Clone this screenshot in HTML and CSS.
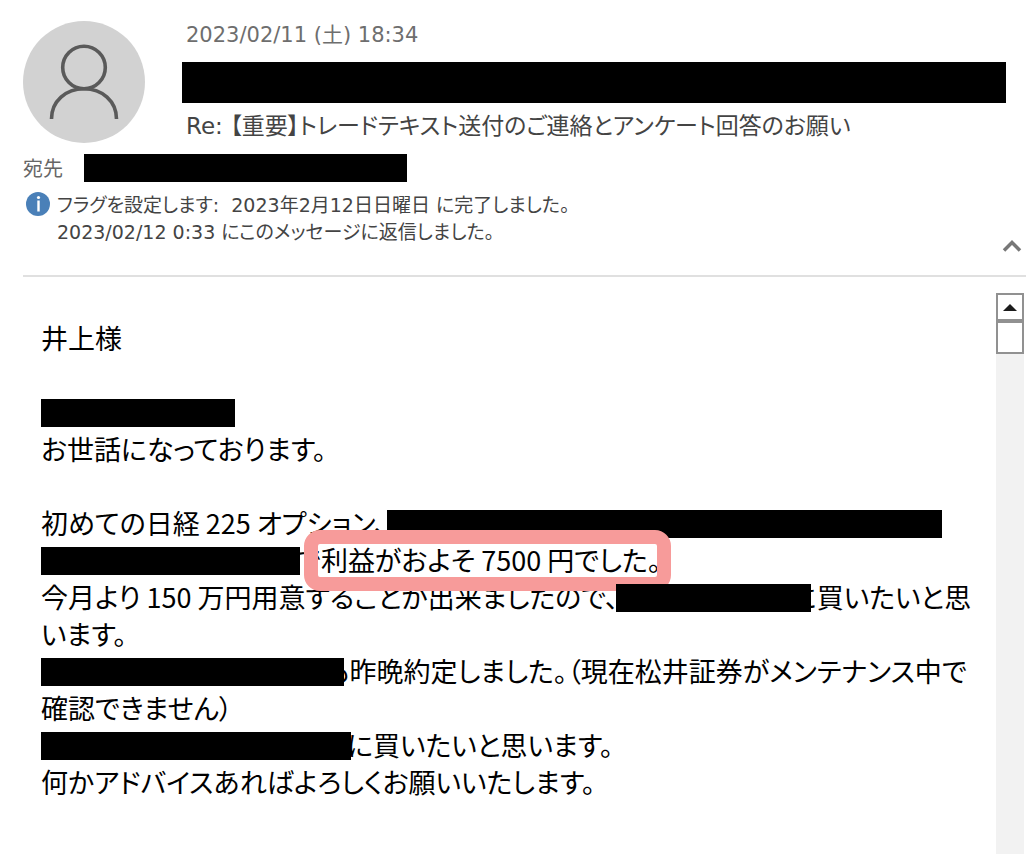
FILE: index.html
```html
<!DOCTYPE html>
<html lang="ja">
<head>
<meta charset="utf-8">
<meta name="viewport" content="width=device-width, initial-scale=1">
<title>Re: 【重要】トレードテキスト送付のご連絡とアンケート回答のお願い</title>
<link rel="stylesheet" href="styles.css">
</head>
<body>
<div class="message">
  <header class="header">
    <div class="summary">
      <svg class="avatar" viewBox="0 0 122 122" aria-hidden="true">
        <circle cx="61" cy="61" r="61" fill="#d2d2d2"/>
        <g fill="none" stroke="#5a5a5a" stroke-width="3.6">
          <circle cx="61" cy="46.500" r="21.300"/>
          <path d="M28.500 98C28.500 80 43 67.800 61 67.800S93.500 80 93.500 98"/>
        </g>
      </svg>
      <div class="heading">
        <time class="date" datetime="2023-02-11T18:34">2023/02/11 (土) 18:34</time>
        <div class="sender redacted"></div>
        <h1 class="subject">Re: 【重要】トレードテキスト送付のご連絡とアンケート回答のお願い</h1>
      </div>
    </div>
    <div class="recipient">
      <span class="label">宛先</span>
      <span class="address redacted"></span>
    </div>
    <div class="notice">
      <svg class="info" viewBox="0 0 24 24" aria-hidden="true">
        <circle cx="12" cy="12" r="12" fill="#4a80b8"/>
        <circle cx="12.500" cy="5.500" r="1.600" fill="#fff"/>
        <path d="M12.500 8.500v11" stroke="#fff" stroke-width="2.400"/>
      </svg>
      <div class="notice-text">
        <p>フラグを設定します:&nbsp; 2023年2月12日日曜日 に完了しました。</p>
        <p>2023/02/12 0:33 にこのメッセージに返信しました。</p>
      </div>
      <button class="collapse" type="button" aria-label="折りたたむ">
        <svg viewBox="0 0 20 14" aria-hidden="true"><path d="M2 11.500L10 3.500L18 11.500" fill="none" stroke="#777" stroke-width="3.500"/></svg>
      </button>
    </div>
  </header>
  <div class="content">
    <main class="body">
      <p>井上様</p>
      <p class="space"><span class="redacted bar name"></span><br>お世話になっております。</p>
      <p class="space">初めての日経 225 オプション、<span class="redacted bar trade"></span><br><span class="redacted bar result"></span>で<mark class="highlight">利益がおよそ 7500 円でした。</mark><br>今月より 150 万円用意することが出来ましたので、<span class="redacted bar plan"></span>に買いたいと思<br>います。<br><span class="redacted bar order"></span>も昨晩約定しました。（現在松井証券がメンテナンス中で<br>確認できません）<br><span class="redacted bar next"></span>に買いたいと思います。<br>何かアドバイスあればよろしくお願いいたします。</p>
    </main>
    <div class="scrollbar">
      <button class="scroll-up" type="button" aria-label="上へスクロール"><svg viewBox="0 0 14 8" aria-hidden="true"><path d="M0 8L7 1L14 8Z" fill="#1c1c1c"/></svg></button>
      <div class="thumb"></div>
    </div>
  </div>
</div>
</body>
</html>
```
FILE: styles.css
```css
* { box-sizing: border-box; }

body {
  margin: 0;
  background: #fff;
  color: #444;
  font-family: "DejaVu Sans", "Noto Sans CJK JP", sans-serif;
  font-feature-settings: "palt";
}

p, h1 { margin: 0; }

button {
  padding: 0;
  border: 0;
  background: none;
}

svg { display: block; }

.message {
  display: flex;
  flex-direction: column;
  min-height: 100vh;
  padding: 20px 8px 2px 23px;
}

.header {
  padding-bottom: 22px;
  border-bottom: 2px solid #e0e0e0;
}

.summary {
  display: flex;
  gap: 37px;
}

.avatar {
  flex: none;
  width: 122px;
  height: 122px;
  margin-top: 1px;
}

.heading {
  flex: 1;
  min-width: 0;
  padding-right: 20px;
}

.date {
  display: block;
  height: 30px;
  padding-left: 4px;
  color: #6e6e6e;
  font-size: 21px;
  line-height: 30px;
}

.redacted { background: #000; }

.sender {
  height: 41px;
  margin: 12px 0 6px;
}

.subject {
  height: 34px;
  padding-left: 4px;
  font-size: 23px;
  font-weight: 400;
  line-height: 34px;
}

.recipient {
  display: flex;
  align-items: center;
  gap: 21px;
  margin-top: 11px;
}

.label {
  height: 28px;
  color: #666;
  font-size: 20px;
  line-height: 30px;
}

.address {
  width: 323px;
  height: 28px;
}

.notice {
  display: flex;
  gap: 7px;
  min-height: 61px;
  margin-top: 10px;
  padding-left: 3px;
  font-size: 19px;
  line-height: 27px;
}

.info {
  flex: none;
  width: 24px;
  height: 24px;
}

.notice-text { flex: 1; }

.collapse {
  align-self: flex-end;
  width: 20px;
  margin-right: 4px;
}

.collapse svg {
  width: 20px;
  height: 14px;
}

.content {
  display: flex;
  flex: 1;
  padding: 16px 2px 0 18px;
}

.body {
  flex: 1;
  min-width: 0;
  padding-top: 26px;
  color: #000;
  font-family: "Noto Sans CJK JP", sans-serif;
  font-size: 27px;
  line-height: 37px;
  white-space: nowrap;
}

.space { margin-top: 37px; }

.bar {
  display: inline-block;
  position: relative;
  height: 28px;
  vertical-align: -4px;
}

.name { width: 194px; }
.trade { width: 555px; }
.result { width: 259px; margin-right: -4px; }
.plan { width: 195px; margin: 0 -20px 0 -3px; }
.order { width: 303px; margin-right: -20px; }
.next { width: 310px; margin-right: -4px; }

.highlight {
  position: relative;
  background: none;
  color: inherit;
}

.highlight::after {
  content: "";
  position: absolute;
  inset: -10px -10px -12px -17px;
  border: 14px solid #f79b9a;
  border-radius: 16px;
}

.scrollbar {
  flex: none;
  width: 28px;
  background: #f2f2f2;
}

.scroll-up, .thumb {
  display: grid;
  place-items: center;
  width: 28px;
  height: 28px;
  border: 2px solid #919191;
  background: #fff;
}

.scroll-up svg {
  width: 14px;
  height: 8px;
}

.thumb { height: 33px; }
```
